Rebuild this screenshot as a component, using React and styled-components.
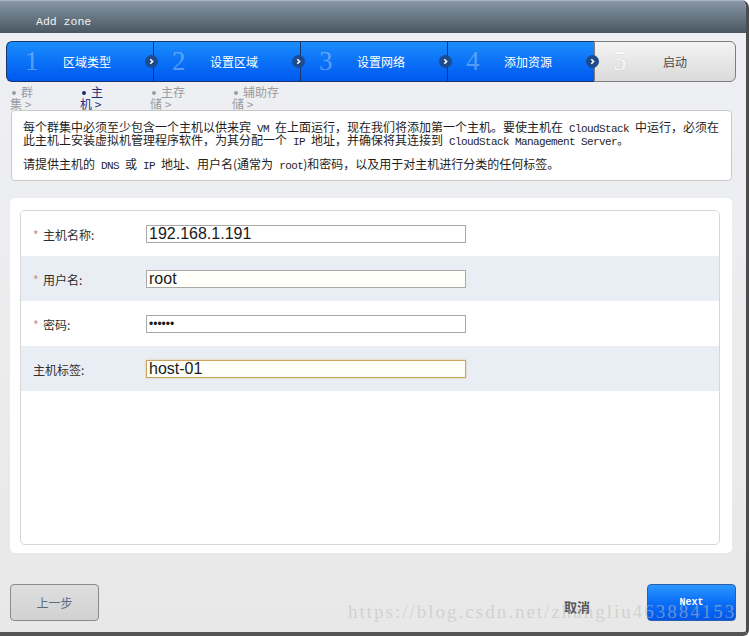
import styled, { createGlobalStyle } from "styled-components"

const GlobalStyle = createGlobalStyle`
    body {
        margin: 0;
        background: #fff;
    }
`

const cjk = `"Noto Sans CJK SC", "Noto Sans", sans-serif`

const Dialog = styled.div`
    position: relative;
    width: 749px;
    height: 636px;
    box-sizing: border-box;
    display: flex;
    flex-direction: column;
    border-right: 3px solid #4c4c4c;
    border-bottom: 4px solid #555;
    border-radius: 0 8px 6px 0;
    overflow: hidden;
    background: linear-gradient(#eef0f4 0, #eceef1 170px, #e8e8e8 100%);
    font-family: ${cjk};
`

const Header = styled.div`
    height: 33px;
    flex-shrink: 0;
    box-sizing: border-box;
    padding: 14px 0 0 36px;
    background: linear-gradient(#8897a7, #64737f 55%, #4a5763);
    border-top: 1px solid #aab6c2;
    color: #f2f2f2;
    font: 11.5px/14px "Liberation Mono", monospace;
`

const Steps = styled.div`
    display: flex;
    flex-shrink: 0;
    margin: 8px 0 0 6px;
    height: 41px;
`

const Step = styled.div`
    position: relative;
    display: flex;
    align-items: center;
    width: ${p => p.$width}px;
    box-sizing: border-box;
    padding-left: 18px;
    background: ${p => p.$done
        ? "linear-gradient(#1b8dfd, #0b72f7 50%, #0058ef)"
        : "linear-gradient(#f4f4f4, #dadada)"};
    border: 1px solid ${p => p.$done ? "#17356b" : "#7d7d7d"};
    border-right: none;

    &:first-child {
        border-radius: 6px 0 0 6px;
    }

    &:last-child {
        border-right: 1px solid #7d7d7d;
        border-radius: 0 6px 6px 0;
    }
`

const StepNumber = styled.span`
    width: 38px;
    font: 27px/1 "Liberation Serif", serif;
    color: ${p => p.$done ? "rgba(255, 255, 255, 0.32)" : "#f8f8f8"};
    text-shadow: ${p => p.$done ? "none" : "0 0 1px #bdbdbd"};
`

const StepLabel = styled.span`
    margin-left: ${p => p.$done ? 0 : 12}px;
    font-size: 12px;
    color: ${p => p.$done ? "#fff" : "#4a4a4a"};
`

const StepArrow = styled.span`
    position: absolute;
    right: -5px;
    top: 13px;
    z-index: 1;
    width: 13px;
    height: 13px;
    display: flex;
    align-items: center;
    justify-content: center;
    border-radius: 50%;
    background: #1d4b8b;
`

const SubSteps = styled.div`
    display: flex;
    flex-shrink: 0;
    height: 25px;
    margin: 3px 0 0 10px;
    padding-top: 1px;
    box-sizing: border-box;
`

const SubStep = styled.div`
    width: ${p => p.$width}px;
    font-size: 12px;
    line-height: 12px;
    color: ${p => p.$active ? "#1b2a78" : "#9c9c9c"};
`

const Dot = styled.span`
    display: inline-block;
    width: 4px;
    height: 4px;
    margin: 0 5px 2px 2px;
    border-radius: 50%;
    background: currentColor;
    vertical-align: middle;
`

const InfoBox = styled.div`
    flex-shrink: 0;
    height: 71px;
    margin: 0 14px 0 11px;
    box-sizing: border-box;
    padding: 9px 11px;
    background: #fff;
    border: 1px solid #c9c9c9;
    border-radius: 4px;
    font-size: 12px;
    color: #1e1e1e;

    p {
        margin: 0;
        height: 13px;
        line-height: 13px;
        white-space: nowrap;
    }

    p + p + p {
        margin-top: 11px;
    }
`

const Code = styled.span`
    font-family: "Liberation Mono", monospace;
    font-size: 11px;
    letter-spacing: -0.6px;
    line-height: 0;
`

const FormPanel = styled.div`
    flex-shrink: 0;
    height: 355px;
    margin: 17px 14px 0 10px;
    box-sizing: border-box;
    padding: 12px 12px 8px 10px;
    background: #fff;
    border-radius: 5px;
`

const FormBox = styled.div`
    height: 100%;
    box-sizing: border-box;
    border: 1px solid #d6d6d6;
    border-radius: 5px;
    overflow: hidden;
`

const Row = styled.div`
    display: flex;
    align-items: center;
    height: 45px;
    padding-left: 12px;
    background: ${p => p.$alt ? "#e9edf4" : "#fff"};
`

const Label = styled.label`
    width: 113px;
    padding-top: 2px;
    font-size: 12px;
    color: #2e2e2e;
`

const Required = styled.span`
    display: inline-block;
    width: 10px;
    color: #d08888;
`

const Input = styled.input`
    width: 320px;
    height: 18px;
    box-sizing: border-box;
    margin: 0;
    padding: 0 2px;
    border: 1px solid ${p => p.$focused ? "#c9a45e" : "#a9a9a9"};
    box-shadow: ${p => p.$focused ? "0 0 2px #e2c98f" : "none"};
    background: ${p => p.$alt ? "#fffffa" : "#fff"};
    font: 16px "Liberation Sans", Arial, sans-serif;
    color: #1a1a1a;
    outline: none;

    &[type="password"] {
        font-size: 12px;
    }
`

const Footer = styled.div`
    flex: 1;
    display: flex;
    align-items: flex-start;
    padding: 31px 10px 0 10px;
`

const PrevButton = styled.button`
    width: 89px;
    height: 37px;
    border: 1px solid #8a8a8a;
    border-radius: 4px;
    background: linear-gradient(#dedede, #d2d2d2);
    color: #5b6b7d;
    font: 12px ${cjk};
`

const CancelButton = styled.button`
    margin: 13px 57px 0 auto;
    padding: 0;
    border: none;
    background: none;
    color: #555;
    font: bold 13px ${cjk};
`

const NextButton = styled.button`
    width: 89px;
    height: 37px;
    border: 1px solid #2b5fae;
    border-radius: 4px;
    background: linear-gradient(#2b96ff, #0b6ff6 50%, #0056e9);
    color: #fff;
    font: bold 10px "Liberation Mono", monospace;
`

const Watermark = styled.div`
    position: absolute;
    left: 348px;
    top: 602px;
    font: 19px/20px "Liberation Serif", serif;
    letter-spacing: 2px;
    color: rgba(190, 190, 190, 0.55);
    white-space: nowrap;
    pointer-events: none;
`

const steps = [
    { n: 1, label: "区域类型", width: 147, done: true },
    { n: 2, label: "设置区域", width: 147, done: true },
    { n: 3, label: "设置网络", width: 147, done: true },
    { n: 4, label: "添加资源", width: 147, done: true },
    { n: 5, label: "启动", width: 142, done: false },
]

const subSteps = [
    { a: "群", b: "集", width: 70 },
    { a: "主", b: "机", width: 70, active: true },
    { a: "主存", b: "储", width: 82 },
    { a: "辅助存", b: "储", width: 80 },
]

const Chevron = () => (
    <svg width="7" height="7" viewBox="0 0 7 7">
        <path d="M2.3 1.2 L4.6 3.5 L2.3 5.8" fill="none" stroke="#fff" strokeWidth="1.6" />
    </svg>
)

const App = () => {
    return (
        <Dialog>
            <GlobalStyle />
            <Header>Add zone</Header>

            <Steps>
                {steps.map(s => (
                    <Step key={s.n} $width={s.width} $done={s.done}>
                        <StepNumber $done={s.done}>{s.n}</StepNumber>
                        <StepLabel $done={s.done}>{s.label}</StepLabel>
                        {s.done && <StepArrow><Chevron /></StepArrow>}
                    </Step>
                ))}
            </Steps>

            <SubSteps>
                {subSteps.map(s => (
                    <SubStep key={s.a} $width={s.width} $active={s.active}>
                        <Dot />{s.a}<br />{s.b} &gt;
                    </SubStep>
                ))}
            </SubSteps>

            <InfoBox>
                <p>每个群集中必须至少包含一个主机以供来宾<Code> VM </Code>在上面运行，现在我们将添加第一个主机。要使主机在<Code> CloudStack </Code>中运行，必须在</p>
                <p>此主机上安装虚拟机管理程序软件，为其分配一个<Code> IP </Code>地址，并确保将其连接到<Code> CloudStack Management Server</Code>。</p>
                <p>请提供主机的<Code> DNS </Code>或<Code> IP </Code>地址、用户名(通常为<Code> root</Code>)和密码，以及用于对主机进行分类的任何标签。</p>
            </InfoBox>

            <FormPanel>
                <FormBox>
                    <Row>
                        <Label><Required>*</Required>主机名称:</Label>
                        <Input defaultValue="192.168.1.191" />
                    </Row>
                    <Row $alt>
                        <Label><Required>*</Required>用户名:</Label>
                        <Input $alt defaultValue="root" />
                    </Row>
                    <Row>
                        <Label><Required>*</Required>密码:</Label>
                        <Input type="password" defaultValue="123456" />
                    </Row>
                    <Row $alt>
                        <Label>主机标签:</Label>
                        <Input $alt $focused defaultValue="host-01" />
                    </Row>
                </FormBox>
            </FormPanel>

            <Footer>
                <PrevButton>上一步</PrevButton>
                <CancelButton>取消</CancelButton>
                <NextButton>Next</NextButton>
            </Footer>

            <Watermark>https://blog.csdn.net/zhangliu463884153</Watermark>
        </Dialog>
    )
}

export default App
